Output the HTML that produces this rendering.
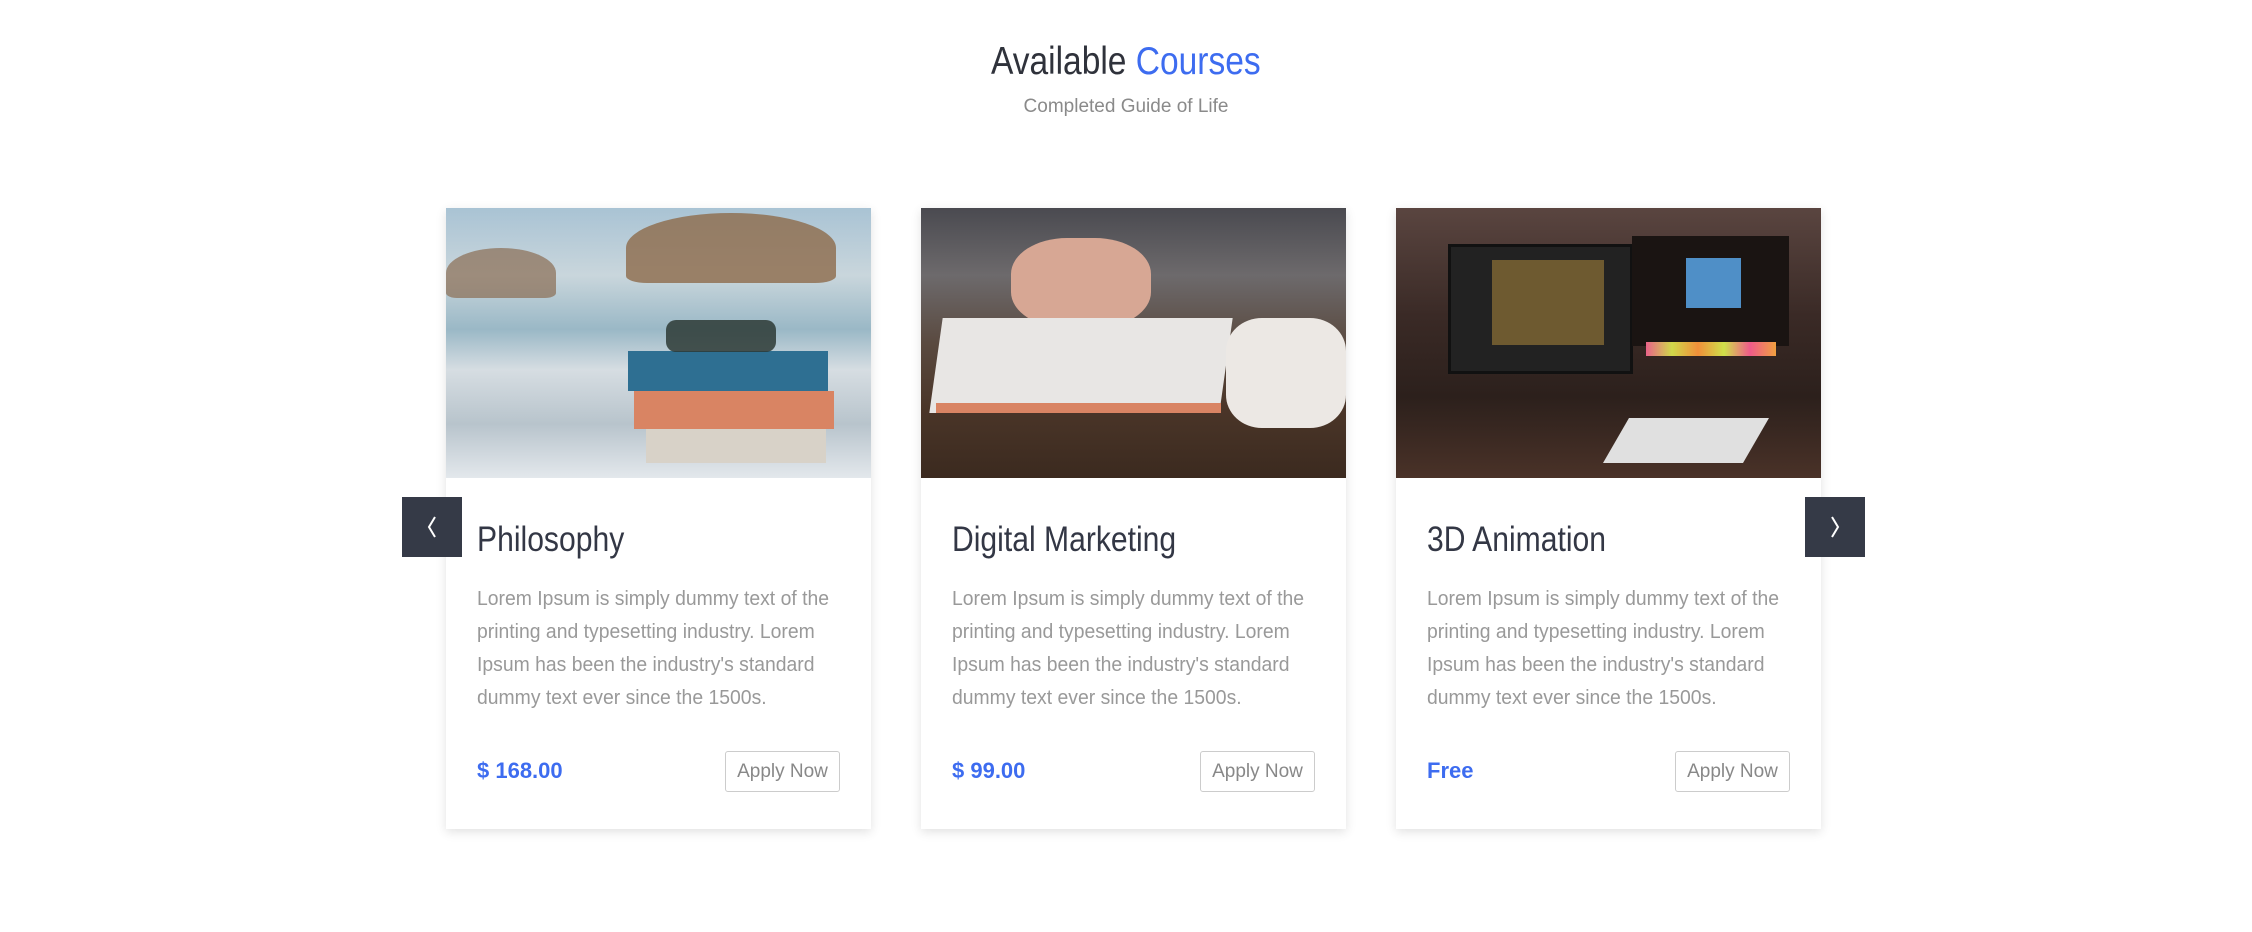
<!DOCTYPE html>
<html><head><meta charset="utf-8"><style>
*{margin:0;padding:0;box-sizing:border-box}
body{width:2252px;height:932px;background:#fff;font-family:"Liberation Sans",sans-serif;position:relative;overflow:hidden}
.sx{display:inline-block;transform:scaleX(0.86);transform-origin:center}
h1{position:absolute;top:40px;left:0;width:2252px;text-align:center;font-weight:normal;font-size:39px;color:#2f323b}
h1 span.c{color:#3d6cf0}
.sub{position:absolute;top:96px;left:0;width:2252px;text-align:center;font-size:19px;color:#8a8a8a}
.card{position:absolute;top:208px;width:425px;height:621px;background:#fff;box-shadow:0 3px 10px rgba(0,0,0,0.12)}
.img{height:270px;width:425px}
.card h3{position:absolute;left:31px;top:312px;font-weight:normal;font-size:35px;color:#333745;transform:scaleX(0.86);transform-origin:left;white-space:nowrap}
.card p{position:absolute;left:31px;top:374px;width:392px;font-size:20.5px;line-height:33px;color:#999;transform:scaleX(0.945);transform-origin:left}
.price{position:absolute;left:31px;top:550px;font-weight:bold;font-size:22px;color:#3d6cf0}
.btn{position:absolute;left:279px;top:543px;width:115px;height:41px;border:1px solid #ccc;border-radius:3px;font-size:19px;color:#888;text-align:center;line-height:39px}
.nav{position:absolute;top:497px;width:60px;height:60px;background:#353a47}
</style></head><body>
<h1><span class="sx">Available <span class="c">Courses</span></span></h1>
<div class="sub">Completed Guide of Life</div>

<div class="card" style="left:446px">
<div class="img" style="background:linear-gradient(180deg,#a9c3d4 0%,#c9d6dc 25%,#9ab8c6 45%,#d6dde2 60%,#b8c4cc 80%,#e3e8ec 100%);position:relative;overflow:hidden">
<div style="position:absolute;left:180px;top:5px;width:210px;height:70px;background:#8d6a4a;border-radius:50% 50% 10% 10%;opacity:.8"></div>
<div style="position:absolute;left:0;top:40px;width:110px;height:50px;background:#8a6c52;border-radius:50% 50% 10% 10%;opacity:.7"></div>
<div style="position:absolute;left:182px;top:143px;width:200px;height:40px;background:#2e6f92"></div>
<div style="position:absolute;left:188px;top:183px;width:200px;height:38px;background:#d98463"></div>
<div style="position:absolute;left:200px;top:221px;width:180px;height:34px;background:#d8d2c8"></div>
<div style="position:absolute;left:220px;top:112px;width:110px;height:32px;background:#2d3a35;border-radius:10px;opacity:.85"></div>
</div>
<h3>Philosophy</h3>
<p>Lorem Ipsum is simply dummy text of the printing and typesetting industry. Lorem Ipsum has been the industry's standard dummy text ever since the 1500s.</p>
<div class="price">$ 168.00</div><div class="btn">Apply Now</div>
</div>

<div class="card" style="left:921px">
<div class="img" style="background:linear-gradient(180deg,#4a4a50 0%,#6d6a6c 25%,#5a4a40 50%,#4a3528 75%,#3b2a1f 100%);position:relative;overflow:hidden">
<div style="position:absolute;left:90px;top:30px;width:140px;height:90px;background:#d7a794;border-radius:40%"></div>
<div style="position:absolute;left:15px;top:110px;width:290px;height:95px;background:#e8e6e4;transform:skewX(-8deg)"></div>
<div style="position:absolute;left:15px;top:195px;width:285px;height:10px;background:#d98463"></div>
<div style="position:absolute;left:305px;top:110px;width:120px;height:110px;background:#ece8e4;border-radius:30%"></div>
</div>
<h3>Digital Marketing</h3>
<p>Lorem Ipsum is simply dummy text of the printing and typesetting industry. Lorem Ipsum has been the industry's standard dummy text ever since the 1500s.</p>
<div class="price">$ 99.00</div><div class="btn">Apply Now</div>
</div>

<div class="card" style="left:1396px">
<div class="img" style="background:linear-gradient(180deg,#5a4540 0%,#3a2a26 40%,#2c201c 70%,#4a3228 100%);position:relative;overflow:hidden">
<div style="position:absolute;left:52px;top:36px;width:185px;height:130px;background:#222;border:3px solid #111"></div>
<div style="position:absolute;left:96px;top:52px;width:112px;height:85px;background:#6e5a30"></div>
<div style="position:absolute;left:236px;top:28px;width:157px;height:110px;background:#1a1412"></div>
<div style="position:absolute;left:290px;top:50px;width:55px;height:50px;background:#4f8fc7"></div>
<div style="position:absolute;left:250px;top:134px;width:130px;height:14px;background:linear-gradient(90deg,#e9638a,#cfd84a,#f08f3a,#cfe04a,#ef5a8a,#f0a040)"></div>
<div style="position:absolute;left:220px;top:210px;width:140px;height:45px;background:#e0e0e0;transform:skewX(-30deg)"></div>
</div>
<h3>3D Animation</h3>
<p>Lorem Ipsum is simply dummy text of the printing and typesetting industry. Lorem Ipsum has been the industry's standard dummy text ever since the 1500s.</p>
<div class="price">Free</div><div class="btn">Apply Now</div>
</div>

<div class="nav" style="left:402px"><svg width="60" height="60"><path d="M33 20 L27 30 L33 40" stroke="#fff" stroke-width="2" fill="none"/></svg></div>
<div class="nav" style="left:1805px"><svg width="60" height="60"><path d="M27 20 L33 30 L27 40" stroke="#fff" stroke-width="2" fill="none"/></svg></div>
</body></html>
